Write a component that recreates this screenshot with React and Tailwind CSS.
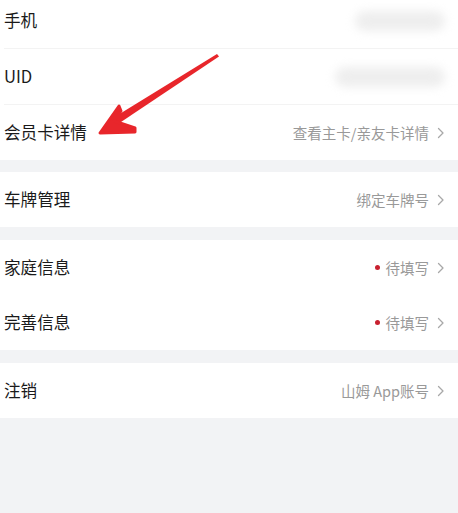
const font = { fontFamily: '"Noto Sans CJK SC", "Noto Sans", sans-serif' };

function Chevron() {
  return (
    <svg width="8" height="12" viewBox="0 0 8 12" className="ml-[8px] shrink-0">
      <path d="M1.5 1.5 L6 6 L1.5 10.5" fill="none" stroke="#a8a8a8" strokeWidth="1.3" strokeLinecap="round" strokeLinejoin="round" />
    </svg>
  );
}

function Row({ label, children, arrow = true }) {
  return (
    <div className="flex h-[55px] items-center justify-between pl-[4px] pr-[13px]">
      <span className="text-[16.6px] text-[#1a1a1a]">{label}</span>
      <div className="flex items-center text-[14.5px] text-[#999999]">
        {children}
        {arrow && <Chevron />}
      </div>
    </div>
  );
}

function Divider() {
  return <div className="ml-[4px] h-px bg-[#f3f3f3]" />;
}

function Blurred({ width }) {
  return <div className={`h-[20px] rounded-full bg-[#eeeeee] blur-[5px] ${width}`} />;
}

function Pending() {
  return (
    <>
      <span className="mr-[6px] h-[5px] w-[5px] rounded-full bg-[#c8202f]" />
      <span>待填写</span>
    </>
  );
}

export default function App() {
  return (
    <div className="relative min-h-screen overflow-hidden bg-[#f2f3f5]" style={font}>
      <section className="-mt-[7px] bg-white">
        <Row label="手机" arrow={false}>
          <Blurred width="w-[90px]" />
        </Row>
        <Divider />
        <Row label="UID" arrow={false}>
          <Blurred width="w-[110px]" />
        </Row>
        <Divider />
        <Row label="会员卡详情">查看主卡/亲友卡详情</Row>
      </section>

      <section className="mt-[12px] bg-white">
        <Row label="车牌管理">绑定车牌号</Row>
      </section>

      <section className="mt-[13px] bg-white">
        <Row label="家庭信息">
          <Pending />
        </Row>
        <Row label="完善信息">
          <Pending />
        </Row>
      </section>

      <section className="mt-[13px] bg-white">
        <Row label="注销">山姆 App账号</Row>
      </section>

      <svg className="pointer-events-none absolute left-0 top-0" width="458" height="513" viewBox="0 0 458 513">
        <polygon points="217,54 219,56.5 118,124 113,118" fill="#e8262b" />
        <polygon
          points="100,133 119,106 121,111 114,121 135,128 135,132"
          fill="#e8262b"
          stroke="#e8262b"
          strokeWidth="3"
          strokeLinejoin="round"
        />
      </svg>
    </div>
  );
}
